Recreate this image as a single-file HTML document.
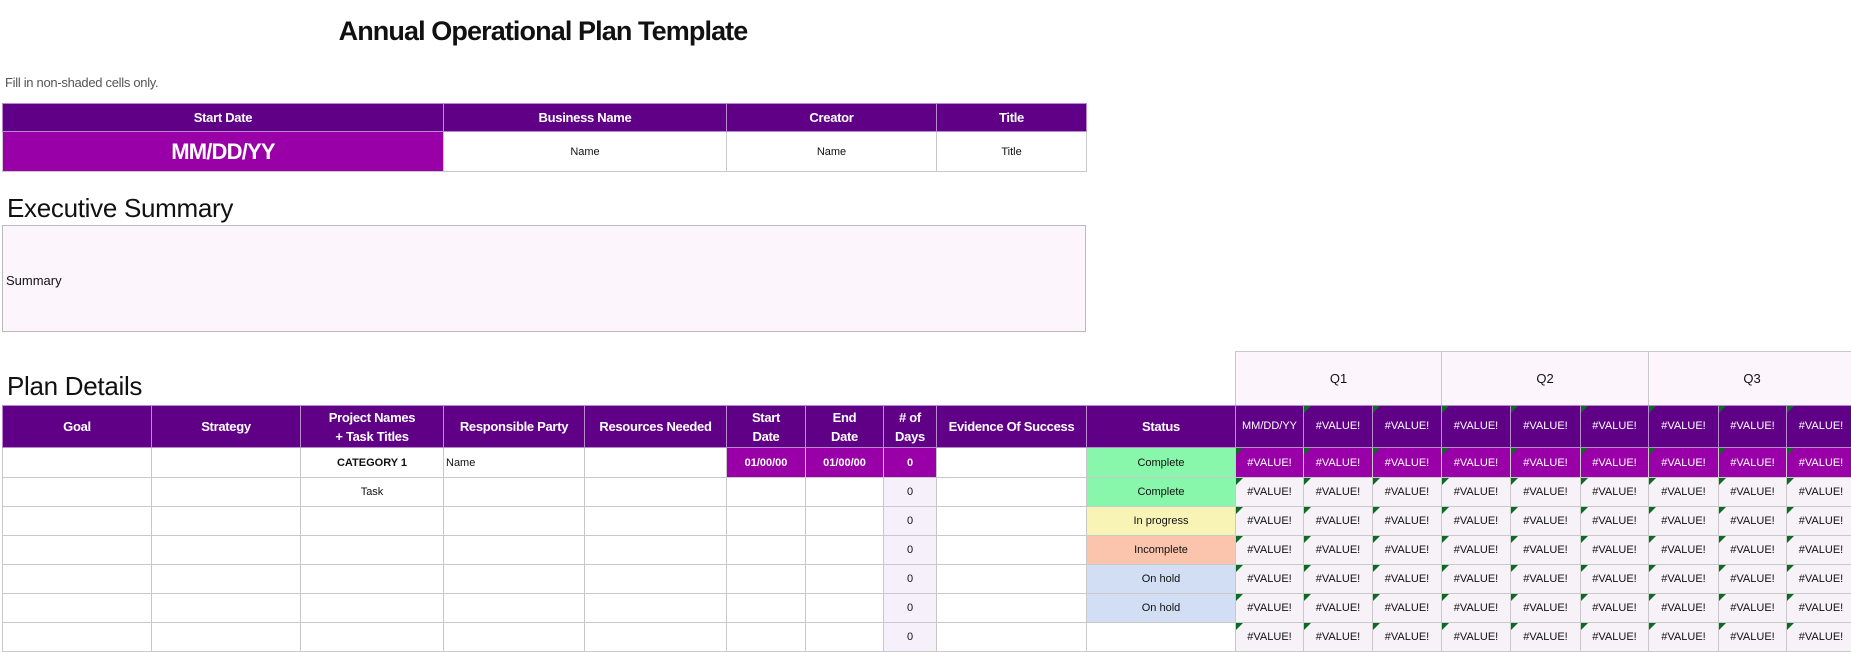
<!DOCTYPE html>
<html><head><meta charset="utf-8"><style>
*{box-sizing:border-box;margin:0;padding:0}
body{width:1851px;height:648px;overflow:hidden;background:#fff;font-family:"Liberation Sans",sans-serif;color:#111;position:relative}
.abs{position:absolute}
table{border-collapse:collapse;table-layout:fixed;position:absolute}
td{border:1px solid #c9c9c9;text-align:center;font-size:11px;overflow:hidden;white-space:nowrap;position:relative;padding:0}
.h td{background:#5f0087;color:#fff;font-weight:bold;font-size:13px;border-color:#b98ad0;line-height:19px;letter-spacing:-0.3px}
.h td.n{font-weight:normal;font-size:11px;letter-spacing:0}
.p{background:#9a00a8;color:#fff;font-weight:bold}
.pv{background:#9a00a8;color:#fff}
.l{background:#f6f0fa}
.v{background:#f6f2f8}
.t::before{content:"";position:absolute;left:0;top:0;border-top:7px solid #0b6b22;border-right:7px solid transparent}
.g{background:#88f7ab}.y{background:#f8f4b6}.o{background:#fbc5ad}.b{background:#d1def4}
</style></head><body>
<div class="abs" style="left:0;width:1086px;top:16px;text-align:center;font-size:27px;font-weight:bold;letter-spacing:-0.9px">Annual Operational Plan Template</div>
<div class="abs" style="left:5px;top:75px;font-size:13px;color:#555;letter-spacing:-0.3px">Fill in non-shaded cells only.</div>
<table style="left:2px;top:103px;width:1084px">
<col style="width:441px"><col style="width:283px"><col style="width:210px"><col style="width:150px">
<tr class="h" style="height:28px"><td>Start Date</td><td>Business Name</td><td>Creator</td><td>Title</td></tr>
<tr style="height:40px"><td class="p" style="font-size:22px;letter-spacing:-0.8px">MM/DD/YY</td><td>Name</td><td>Name</td><td>Title</td></tr>
</table>
<div class="abs" style="left:7px;top:193px;font-size:26px;letter-spacing:-0.3px">Executive Summary</div>
<div class="abs" style="left:2px;top:225px;width:1084px;height:107px;background:#fcf5fc;border:1px solid #bbb"><span class="abs" style="left:3px;top:47px;font-size:13px">Summary</span></div>
<div class="abs" style="left:7px;top:371px;font-size:26px;letter-spacing:-0.3px">Plan Details</div>
<table style="left:1235px;top:351px;width:620px">
<col style="width:206px"><col style="width:207px"><col style="width:207px">
<tr style="height:54px"><td style="background:#fcf6fc;font-size:13px">Q1</td><td style="background:#fcf6fc;font-size:13px">Q2</td><td style="background:#fcf6fc;font-size:13px">Q3</td></tr>
</table>
<table style="left:2px;top:405px;width:1853px">
<col style="width:149px"><col style="width:149px"><col style="width:143px"><col style="width:141px"><col style="width:142px"><col style="width:79px"><col style="width:78px"><col style="width:53px"><col style="width:150px"><col style="width:149px"><col style="width:68px"><col style="width:69px"><col style="width:69px"><col style="width:69px"><col style="width:70px"><col style="width:68px"><col style="width:70px"><col style="width:68px"><col style="width:69px">
<tr class="h" style="height:42px"><td>Goal</td><td>Strategy</td><td>Project Names<br>+ Task Titles</td><td>Responsible Party</td><td>Resources Needed</td><td>Start<br>Date</td><td>End<br>Date</td><td># of<br>Days</td><td>Evidence Of Success</td><td>Status</td><td class="n">MM/DD/YY</td><td class="n t">#VALUE!</td><td class="n t">#VALUE!</td><td class="n t">#VALUE!</td><td class="n t">#VALUE!</td><td class="n t">#VALUE!</td><td class="n t">#VALUE!</td><td class="n t">#VALUE!</td><td class="n t">#VALUE!</td></tr>
<tr style="height:30px"><td></td><td></td><td style="font-weight:bold">CATEGORY 1</td><td style="text-align:left;padding-left:2px">Name</td><td></td><td class="p">01/00/00</td><td class="p">01/00/00</td><td class="p">0</td><td></td><td class="g">Complete</td><td class="pv t">#VALUE!</td><td class="pv t">#VALUE!</td><td class="pv t">#VALUE!</td><td class="pv t">#VALUE!</td><td class="pv t">#VALUE!</td><td class="pv t">#VALUE!</td><td class="pv t">#VALUE!</td><td class="pv t">#VALUE!</td><td class="pv t">#VALUE!</td></tr>
<tr style="height:29px"><td></td><td></td><td>Task</td><td></td><td></td><td></td><td></td><td class="l">0</td><td></td><td class="g">Complete</td><td class="v t">#VALUE!</td><td class="v t">#VALUE!</td><td class="v t">#VALUE!</td><td class="v t">#VALUE!</td><td class="v t">#VALUE!</td><td class="v t">#VALUE!</td><td class="v t">#VALUE!</td><td class="v t">#VALUE!</td><td class="v t">#VALUE!</td></tr>
<tr style="height:29px"><td></td><td></td><td></td><td></td><td></td><td></td><td></td><td class="l">0</td><td></td><td class="y">In progress</td><td class="v t">#VALUE!</td><td class="v t">#VALUE!</td><td class="v t">#VALUE!</td><td class="v t">#VALUE!</td><td class="v t">#VALUE!</td><td class="v t">#VALUE!</td><td class="v t">#VALUE!</td><td class="v t">#VALUE!</td><td class="v t">#VALUE!</td></tr>
<tr style="height:29px"><td></td><td></td><td></td><td></td><td></td><td></td><td></td><td class="l">0</td><td></td><td class="o">Incomplete</td><td class="v t">#VALUE!</td><td class="v t">#VALUE!</td><td class="v t">#VALUE!</td><td class="v t">#VALUE!</td><td class="v t">#VALUE!</td><td class="v t">#VALUE!</td><td class="v t">#VALUE!</td><td class="v t">#VALUE!</td><td class="v t">#VALUE!</td></tr>
<tr style="height:29px"><td></td><td></td><td></td><td></td><td></td><td></td><td></td><td class="l">0</td><td></td><td class="b">On hold</td><td class="v t">#VALUE!</td><td class="v t">#VALUE!</td><td class="v t">#VALUE!</td><td class="v t">#VALUE!</td><td class="v t">#VALUE!</td><td class="v t">#VALUE!</td><td class="v t">#VALUE!</td><td class="v t">#VALUE!</td><td class="v t">#VALUE!</td></tr>
<tr style="height:29px"><td></td><td></td><td></td><td></td><td></td><td></td><td></td><td class="l">0</td><td></td><td class="b">On hold</td><td class="v t">#VALUE!</td><td class="v t">#VALUE!</td><td class="v t">#VALUE!</td><td class="v t">#VALUE!</td><td class="v t">#VALUE!</td><td class="v t">#VALUE!</td><td class="v t">#VALUE!</td><td class="v t">#VALUE!</td><td class="v t">#VALUE!</td></tr>
<tr style="height:29px"><td></td><td></td><td></td><td></td><td></td><td></td><td></td><td class="l">0</td><td></td><td></td><td class="v t">#VALUE!</td><td class="v t">#VALUE!</td><td class="v t">#VALUE!</td><td class="v t">#VALUE!</td><td class="v t">#VALUE!</td><td class="v t">#VALUE!</td><td class="v t">#VALUE!</td><td class="v t">#VALUE!</td><td class="v t">#VALUE!</td></tr>
</table>
</body></html>
